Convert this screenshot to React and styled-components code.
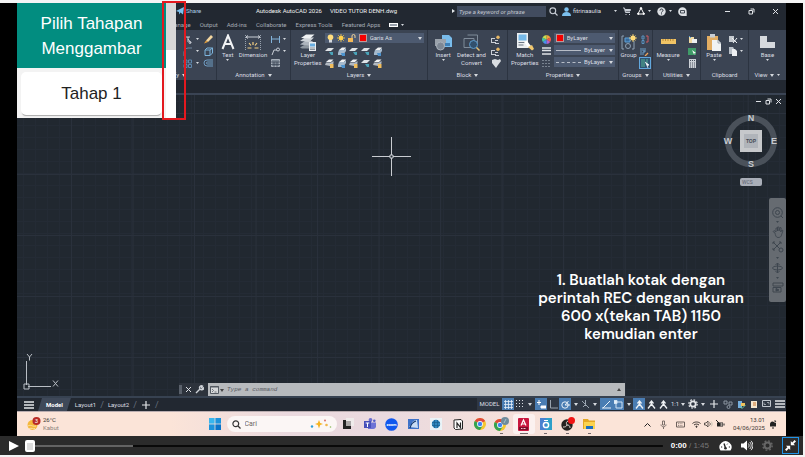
import React from "react";
import styled, { createGlobalStyle, css } from "styled-components";

const GlobalStyle = createGlobalStyle`
  * { box-sizing: border-box; }
  body { margin: 0; background: #f4f4f5; font-family: Roboto, "Open Sans", sans-serif; }
  button, input, select { font: inherit; color: inherit; margin: 0; padding: 0; border: 0; background: none; }
  button { cursor: pointer; }
  svg { display: block; flex: none; }
`;

/* ---------- icons ---------- */

const L = "#c9ced6";

const ICONS = {
  caret: [4, 3, <path d="M0 0h4L2 3z" fill="#d5d9de" />],
  dot: [3, 2, <path d="M0 0h3L1.5 2z" fill="#d5d9de" />],
  dotDark: [3, 2, <path d="M0 0h3L1.5 2z" fill="#3e464f" />],
  play: [10, 12, <path d="M0 1l10 5-10 5z" fill="#fff" />],
  plane: [8, 8, <path d="M0 4L8 0 7 7.500 4.500 5.500 3 7.500V5z" fill="#7cc0ee" />],
  search: [9, 9, <g fill="none" stroke={L} strokeWidth="1.100"><circle cx="3.800" cy="3.800" r="2.900" /><path d="M6 6l2.500 2.500" /></g>],
  searchDark: [9, 9, <g fill="none" stroke="#333" strokeWidth="1.200"><circle cx="3.800" cy="3.800" r="2.900" /><path d="M6 6l2.500 2.500" /></g>],
  user: [9, 9, <g fill="#7cc0ee"><circle cx="4.500" cy="2.500" r="2.200" /><path d="M0 9c0-3 2-4 4.500-4S9 6 9 9z" /></g>],
  cart: [8, 8, <g stroke={L} fill="none"><path d="M0 1h1.500l1 4.500H7" /><path d="M2 2.500h5.500L7 4H2.500z" fill={L} /><path d="M2.500 7.500h1M6 7.500h1" /></g>],
  aNodes: [8, 8, <g fill="none" stroke="#fff"><path d="M4 1L1 7h6z" /><circle cx="4" cy="1.300" r=".8" fill="#fff" /><circle cx="1.200" cy="6.800" r=".7" fill="#fff" /><circle cx="6.800" cy="6.800" r=".7" fill="#fff" /></g>],
  help: [9, 9, <g><circle cx="4.500" cy="4.500" r="4.200" fill="#dde0e4" /><path d="M3 3.500c0-2 3-2 3 0 0 1-1.500 1-1.500 2M4.500 6.400v1" stroke="#222933" fill="none" /></g>],
  chat: [9, 9, <g><path d="M4.500.3a4.200 4.200 0 0 1 4.200 4.200V9H4.500a4.200 4.200 0 0 1 0-8.700z" fill="#dde0e4" /><path d="M2.500 3.500h4v2.500h-4z" fill="none" stroke="#222933" strokeWidth=".8" /></g>],
  min: [7, 7, <path d="M1 3.500h5" stroke="#dfe2e6" />],
  restore: [7, 7, <g fill="none" stroke="#dfe2e6"><path d="M1 2.500h3.500V6H1z" /><path d="M2.500 1H6v3.500" /></g>],
  close: [7, 7, <path d="M1 1l5 5M6 1L1 6" stroke="#dfe2e6" />],
  trim: [9, 9, <g stroke={L} fill="none"><path d="M1 2h6M5 2v5M5 4l3 4" /><circle cx="7" cy="7.500" r="1" /></g>],
  fillet: [9, 9, <path d="M1 9V5a4 4 0 0 1 4-4h4" stroke="#71839a" fill="none" />],
  array: [9, 9, <path d="M1 1h3v3H1zM5.500 1h3v3h-3zM1 5.500h3v3H1zM5.500 5.500h3v3h-3z" stroke="#5f87ab" fill="none" />],
  pencil: [9, 9, <g><path d="M2 5.500L7 0l2 2-5 5z" fill="#f3d6a0" /><path d="M0 8.500L2 5.500 4 7z" fill="#e9a13a" /></g>],
  box: [9, 9, <g stroke="#7cb4dd" fill="none"><path d="M1 3h5v5.500H1zM1 3l2-2h5.500L6 3M8.500 1v5L6 8.500" /></g>],
  offset: [10, 8, <g stroke="#6f9cc2" fill="none"><path d="M10 1H4a3 3 0 0 0 0 6h6" /><path d="M10 3H4.500a1 1 0 0 0 0 2H10" /></g>],
  textA: [14, 16, <path d="M1.500 15L7 1.500 12.500 15M3.500 10h7" fill="none" stroke="#f1f3f5" strokeWidth="2" />],
  dimension: [18, 17, <g fill="none"><path d="M1.500 1v15M16.500 1v15" stroke="#98a2ae" strokeDasharray="1 1" /><path d="M2 3h14M2 3l2-1.500M2 3l2 1.500M16 3l-2-1.500M16 3l-2 1.500" stroke={L} /><path d="M9 8v3M5 9l2 2.500M13 9l-2 2.500M3.500 14h4M14.500 14h-4" stroke="#f3cf83" strokeWidth="1.200" /></g>],
  dimSmall: [9, 9, <g stroke="#83b3da" fill="none"><path d="M.5 1v7M8.500 1v7" /><path d="M1 4h7" /></g>],
  leader: [9, 9, <g stroke={L} fill="none"><path d="M1 8l2-5h3" /><circle cx="7" cy="2.500" r="1.500" /></g>],
  table: [9, 8, <g><path d="M.5.5h8v7h-8z" stroke="#a6aeb8" fill="#7c8794" /><path d="M0 3h9M3 3v5M6 3v5M0 5.500h9" stroke="#3a4453" strokeWidth=".7" /></g>],
  layers: [18, 17, <g><path d="M1 13.500l5-3h8l-4 4H3z" fill="#8d969f" /><path d="M1 10.500l5-3.500h8l-4 4.500z" fill="#aeb5bd" /><path d="M1 7l5-3.500h9L10.500 8z" fill="#ced3d8" /><path d="M2 4l5-3.500h8.500L11 4.500z" fill="#f0f2f4" /><path d="M10 8h7v9h-7z" fill="#e9edf0" /><path d="M11 9.500h5v3h-5z" fill="#69aee2" /><path d="M11 14h5M11 15.500h5" stroke="#5e6875" strokeWidth=".7" /></g>],
  bulb: [7, 9, <g><circle cx="3.500" cy="3.200" r="2.800" fill="#ffdd7e" /><path d="M2 6h3v2.500H2z" fill="#d7dade" /></g>],
  sun: [8, 8, <g><circle cx="4" cy="4" r="2.200" fill="#ffd04d" /><path d="M4 0v8M0 4h8M1.200 1.200l5.600 5.600M6.800 1.200L1.200 6.800" stroke="#ffd04d" strokeWidth=".8" /></g>],
  lock: [8, 8, <g><path d="M0 4h5v4H0z" fill="#f4b957" /><path d="M4 4V2a1.500 1.500 0 0 1 3 0v2" fill="none" stroke="#f1d39b" /></g>],
  layA: [9, 9, <g><path d="M0 4l3-3h6L6 4z" fill="#dfe3e7" /><path d="M4 5h4v3H6z" fill="#4aa3b8" /></g>],
  layB: [9, 9, <g><path d="M2 3l3-2.500h4L7 3z" fill="#eef0f2" /><path d="M1 6l1-3h5l2-2v3L6 8H1z" fill="#a5b9cc" /><path d="M4 6h4v3H5z" fill="#4c93ce" /></g>],
  layC: [9, 9, <g><path d="M1 3l3-2.500h4.500L6 3z" fill="#eef0f2" /><path d="M0 6l1-2.500h5L8.500 2v2.500L5 7z" fill="#b3bac2" /><path d="M5 5h3.500v4H5z" fill="#f0bd5c" /></g>],
  insert: [18, 17, <g><path d="M8 1h7l3 3v9H8z" fill="#79bceb" /><path d="M1 5h11v7H1z" fill="#9aa2ab" /><circle cx="6.500" cy="12" r="4" fill="#7e8894" stroke="#a9b1ba" /><path d="M11 9h5v3h-5z" fill="#3f7fb5" /></g>],
  detect: [17, 17, <g fill="none" stroke="#7f8b99"><path d="M4.500 1h10v9M1 4.500h10v9H1z" /><circle cx="10.500" cy="10.500" r="4" fill="#31506d" stroke="#5d9ccc" /><path d="M13.500 13.500l3 3" stroke="#e4c177" strokeWidth="1.500" /></g>],
  attr: [9, 9, <g><path d="M0 3h4v1H1v3h4v1H0zM4 5h3v1H4z" fill={L} /><circle cx="7" cy="2.300" r="1.700" fill="#e5b765" /><path d="M4 8.500h4" stroke={L} /></g>],
  tagCheck: [10, 9, <path d="M1 1l3-1 3 1 2-1 1 2-3 4-2 3-4-5z" fill="#d9dde1" />],
  match: [18, 18, <g><path d="M1 0h11v15H1z" fill="#eceff1" /><path d="M2.500 1.500h8v6h-8z" fill="#75b9e9" /><path d="M2.500 9.500h7M2.500 12h5" stroke="#6b7684" /><path d="M8 9l3-1 4 5-2.500 2z" fill="#fff" /><path d="M12 14l4-2 2 4-2 1.500z" fill="#f1c86e" /></g>],
  wheel: [9, 9, <g><path d="M4.500 4.500V0A4.500 4.500 0 0 1 8.500 2.500z" fill="#f0a23b" /><path d="M4.500 4.500l4-2a4.500 4.500 0 0 1-.3 4.500z" fill="#f05a4b" /><path d="M4.500 4.500l3.700 2.500A4.500 4.500 0 0 1 4.500 9z" fill="#b562cf" /><path d="M4.500 4.500V9A4.500 4.500 0 0 1 .8 7z" fill="#4b8ff0" /><path d="M4.500 4.500L.8 7a4.500 4.500 0 0 1-.3-4.500z" fill="#48c3a1" /><path d="M4.500 4.500l-4-2A4.500 4.500 0 0 1 4.500 0z" fill="#c8dc4f" /></g>],
  weight: [9, 9, <path d="M0 1h9M0 3.500h9M0 7h9" stroke="#dfe2e6" strokeWidth="1.500" />],
  ltype: [9, 9, <g stroke="#78828f"><path d="M0 1.500h9M0 4.500h9M0 7.500h9" strokeDasharray="2 1" /></g>],
  group: [16, 16, <g fill="none"><path d="M3 2H1v13h2M11 15h2V7" stroke="#8fa1b4" /><path d="M4 4h5v4H4z" fill="#38699a" stroke="#5fa1d8" /><circle cx="7" cy="12" r="2.500" stroke="#8fa1b4" /><circle cx="12" cy="4" r="2.500" fill="#ffe08a" /><path d="M12 0v8M8 4h8M9.500 1.500l5 5M14.500 1.500l-5 5" stroke="#ffd76e" strokeWidth=".8" /></g>],
  ungroup: [8, 9, <g fill="none"><path d="M1 1h2v3H1zM1 5.500h2v3H1z" stroke="#5a93c0" /><path d="M5 1h2v6H5" stroke="#cf5b62" /></g>],
  groupEdit: [9, 9, <g fill="none"><path d="M1 1v7M3 1v3h2M3 8V5h2V1" stroke="#6b9dc6" /><path d="M5 9l3-3" stroke="#f0a75a" strokeWidth="1.300" /></g>],
  groupSel: [10, 10, <g fill="none"><path d="M2 1v8M4 1v8M7 1v5" stroke="#55b292" /><path d="M5 4l4 3-2 .5L8 10" stroke="#fff" fill="#fff" strokeWidth=".7" /></g>],
  ruler: [15, 6, <g><path d="M0 0h15v5H0z" fill="#f1c465" /><path d="M2 0v2M4.500 0v2M7 0v2M9.500 0v2M12 0v2" stroke="#a87829" strokeWidth=".7" /></g>],
  idpt: [9, 9, <g><path d="M1 2h5v6H1z" fill="#f0d9a4" /><path d="M4 4h5v4H4z" fill="#eef1f3" /><path d="M1 1l2 2" stroke="#5fa8dc" /></g>],
  qsel: [9, 9, <g><path d="M0 1h8v7H0z" fill="#3f9b68" /><path d="M4 3l4 3-2 .5.500 2z" fill="#fff" /></g>],
  calc: [7, 9, <g><path d="M0 0h7v9H0z" fill="#ccd1d7" /><path d="M1 1.500h5M1 4h5M1 6h5M1 8h5" stroke="#48515e" strokeDasharray="1 1" /></g>],
  paste: [16, 17, <g><path d="M1 2h11v14H1z" fill="#e3ad62" /><path d="M4 0h5v3.500H4z" fill="#c9ced4" /><path d="M6 6h6l3 3v8H6z" fill="#f1f3f4" /><path d="M12 6v3h3" fill="none" stroke="#9ba4ae" /></g>],
  cut: [9, 9, <g><path d="M0 1h5v6H0z" fill="#c5cad0" /><path d="M3 3l5 5M8 3L4 8" stroke="#eef0f3" /></g>],
  copy: [9, 9, <g><path d="M0 0h4l1 1.500V7H0z" fill="#b9c0c8" /><path d="M3 2h3l2 2v5H3z" fill="#eef0f3" /></g>],
  base: [17, 14, <path d="M1 1h7v6h8v6H1z" fill="#d6d9dd" />],
  burger: [10, 8, <path d="M0 1h10M0 4h10M0 7h10" stroke="#e3e6e9" strokeWidth="1.300" />],
  plus: [8, 8, <path d="M4 0v8M0 4h8" stroke="#e3e6e9" strokeWidth="1.200" />],
  grid: [9, 9, <path d="M1.500 0v9M4.500 0v9M7.500 0v9M0 1.500h9M0 4.500h9M0 7.500h9" stroke="#e3edf6" strokeWidth=".8" />],
  dots: [7, 8, <path d="M.5 0v8M3.500 0v8M6.500 0v8" stroke="#d8dce1" strokeDasharray="1 2" />],
  dyn: [9, 9, <path d="M2 0v5M0 2.500h4M4 6h5v2H4z" stroke="#fff" fill="#fff" />],
  ortho: [9, 9, <path d="M1.500 0v8H9" stroke="#98a2ad" fill="none" />],
  polar: [9, 9, <g fill="none" stroke="#e8f0f8"><circle cx="4" cy="5" r="3.200" /><path d="M4 5h5M4 5l3.500-4" /></g>],
  iso: [9, 9, <path d="M1 1l7 7M4.500 0v6M2 7l2-2" stroke="#9aa4af" fill="none" />],
  track: [9, 9, <path d="M1 8L8 1M0 8h9" stroke="#e8f0f8" fill="none" />],
  osnap: [9, 9, <g fill="none" stroke="#cfe2f3"><path d="M2 2h6v6H2z" /><path d="M0 .5h3v3H0z" fill="#e8f0f8" /></g>],
  anno: [9, 9, <path d="M4.500.5v3.500L1 8.500M4.500 4L8 8.500M2.500 3.500L4.500 1l2 2.500" stroke="#f0f3f6" strokeWidth="1.300" fill="none" />],
  gear: [10, 10, <g fill="none" stroke="#e3e6e9"><circle cx="5" cy="5" r="2.700" strokeWidth="1.800" /><circle cx="5" cy="5" r="4.200" strokeDasharray="1.700 1.600" strokeWidth="1.200" /></g>],
  gearDim: [11, 11, <g fill="none" stroke="#666"><circle cx="5.500" cy="5.500" r="3" strokeWidth="2" /><circle cx="5.500" cy="5.500" r="4.700" strokeDasharray="1.850 1.850" strokeWidth="1.400" /></g>],
  iso2: [10, 9, <g fill="none" stroke="#8b95a1"><path d="M1 1h3v3H1zM6 2h3v3H6z" /><circle cx="5.500" cy="7" r="1.500" /></g>],
  hw: [9, 9, <g><path d="M1 1h4v7H1z" fill="#74aede" /><path d="M4 3h4v3H4z" fill="#f0c25b" /><path d="M3 6l2 2.500L8.500 5" stroke="#68c3a0" fill="none" /></g>],
  clean: [9, 9, <g><path d="M1 1h6v7H1z" fill="#f4e7d0" /><path d="M3 3h3M3 5h3" stroke="#c8742e" /></g>],
  full: [9, 8, <g fill="none" stroke="#bfc5cc"><path d="M.5.500h8v6h-8z" /><path d="M5 2.500h2v2M2 2.500v2h2" strokeWidth=".7" /></g>],
  axes: [37, 38, <g fill="none" stroke="#b9bec5"><path d="M4.500 32V8M6 33.500h23" /><path d="M2 31h5v5H2z" /><path d="M5 1l2.500 3L10 1M7.500 4v3.500M31 27.500l5 6M36 27.500l-5 6" /></g>],
  cross: [39, 39, <g stroke="#c9ccd1"><path d="M19.500 0v18M19.500 21v18M0 19.500h18M21 19.500h18" /><path d="M18 18h3v3h-3z" fill="#212830" /></g>],
  wrench: [9, 9, <path d="M1 8l4-4M5 4a2 2 0 0 1 2.500-3L6.500 2.500l1 1L9 2.500A2.300 2.300 0 0 1 5 4z" stroke="#cfd3d8" strokeWidth="1.400" fill="none" />],
  prompt: [14, 8, <g><path d="M.5.500h8v7h-8z" fill="#d6d8da" stroke="#555b63" /><path d="M0 1h9" stroke="#555b63" /><path d="M2 3l1.500 1.500L2 6M4.500 6h2" stroke="#555b63" fill="none" strokeWidth=".8" /><path d="M10 3h4l-2 3z" fill="#444" /></g>],
  up: [4, 3, <path d="M0 3h4L2 0z" fill="#444" />],
  wheelNav: [11, 11, <g fill="none" stroke="#3e464f"><circle cx="5.500" cy="5.500" r="4.800" /><circle cx="5.500" cy="5.500" r="2" /><path d="M9 9l2 2" /></g>],
  hand: [12, 12, <path d="M3 7L1 5.500l1-1 2 1.500V2h1.500v3V1H7v4l1-3.500 1.200.4L8.700 6l1.300-2 1 .6L9.500 9c-.5 2-1.500 2.500-3.500 2.500S3.500 9.500 3 7z" fill="none" stroke="#3e464f" strokeWidth=".9" />],
  zoomNav: [12, 12, <g fill="none" stroke="#3e464f"><path d="M1 1l7 7M9 1L1 9M1 3V1h2M7 1h2v2M1 7v2h2" /><circle cx="9" cy="9" r="2" /></g>],
  orbit: [11, 12, <g fill="none" stroke="#3e464f"><path d="M5.500 1v10M3.500 3l2-2 2 2M3.500 9l2 2 2-2" /><ellipse cx="5.500" cy="6" rx="5" ry="2" /></g>],
  movie: [12, 11, <g fill="none" stroke="#3e464f"><path d="M1 1h10v3H1zM1 5.500h8V10H1z" /><path d="M4 6.500L7 8 4 9z" fill="#3e464f" /></g>],
  weather: [14, 14, <g><circle cx="5.500" cy="8" r="5" fill="#f5b83b" /><path d="M1 9c3-2 4 1 8 0M2 11.500c3-1 4 1 6 0" stroke="#fbe0a2" fill="none" /><circle cx="9.500" cy="4" r="4" fill="#b82a25" /></g>],
  windows: [12, 12, <g fill="#1c93dc"><path d="M0 0h5.600v5.600H0z" fill="#38b6ee" /><path d="M6.400 0H12v5.600H6.400z" /><path d="M0 6.400h5.600V12H0z" /><path d="M6.400 6.400H12V12H6.400z" fill="#0b74c9" /></g>],
  sparkle: [22, 10, <g><path d="M9 1l1.200 3L13 5l-2.800 1L9 9.500 7.800 6 5 5l2.800-1z" fill="#f6b420" /><circle cx="2" cy="7.500" r="1.200" fill="#2c9fd6" /><circle cx="15" cy="1.500" r=".9" fill="#d9635a" /><circle cx="16.500" cy="6" r="1.300" fill="#f0b64b" /><circle cx="20.500" cy="8" r=".8" fill="#8dbb5b" /></g>],
  taskview: [12, 12, <g><path d="M1 2h8v9H1z" fill="#222" /><path d="M4 0h8v8H4z" fill="#efeceb" /><path d="M4 3h5v5H4z" fill="#a9a6a6" /></g>],
  teams: [12, 12, <g><circle cx="6.500" cy="2" r="1.900" fill="#6a6fd0" /><circle cx="10.300" cy="2.700" r="1.300" fill="#5059c9" /><path d="M4 4.500h8V9a3 3 0 0 1-3 2H4z" fill="#6d72d6" /><path d="M0 3h7v7H0z" fill="#4650ba" /><path d="M1.700 5h3.600M3.500 5v4" stroke="#fff" /></g>],
  zoom: [13, 13, <g><circle cx="6.500" cy="6.500" r="6.300" fill="#1157ee" /><text x="6.500" y="7.500" fontSize="4" fontWeight="700" textAnchor="middle" fill="#fff">zoom</text></g>],
  curve: [11, 12, <g><path d="M0 1h11v10H0z" fill="#3f73c9" /><path d="M1 9l3-3c0-3 3-4 5-4l1 8" fill="#c9dcf4" /><path d="M2 10c1-4 3-6 6-7" stroke="#14386e" fill="none" strokeWidth="1.200" /></g>],
  atom: [12, 12, <g><path d="M0 0h12v12H0z" fill="#eaf3f7" /><circle cx="6" cy="6" r="4.200" fill="#2f86bd" /><path d="M2 4.500h8M2 7.500h8M4.500 2v8M7.500 2v8" stroke="#16608f" strokeWidth=".7" /></g>],
  notion: [10, 11, <g><path d="M1 1l7-.5L9.500 2v8L2.500 10.500 1 9z" fill="#fff" stroke="#222" /><path d="M4 9V4l3.500 4.500v-5" stroke="#222" fill="none" strokeWidth="1.200" /></g>],
  chrome: [12, 12, <g><circle cx="6" cy="6" r="6" fill="#f6c62f" /><path d="M6 6L.8 3A6 6 0 0 1 11.200 3z" fill="#df4a3c" /><path d="M6 6L.8 3A6 6 0 0 0 6 12l2.500-4z" fill="#34a353" /><circle cx="6" cy="6" r="2.900" fill="#fff" /><circle cx="6" cy="6" r="2.200" fill="#4285f4" /></g>],
  chromeAlt: [15, 14, <g><g transform="translate(0 2)"><circle cx="6" cy="6" r="6" fill="#f6c62f" /><path d="M6 6L.8 3A6 6 0 0 1 11.200 3z" fill="#df4a3c" /><path d="M6 6L.8 3A6 6 0 0 0 6 12l2.500-4z" fill="#34a353" /><circle cx="6" cy="6" r="2.900" fill="#fff" /><circle cx="6" cy="6" r="2.200" fill="#4285f4" /></g><circle cx="11" cy="4" r="4" fill="#708c9c" /><path d="M10 6l2-4" stroke="#a6c0cc" /></g>],
  acad: [11, 13, <g><path d="M0 1a1 1 0 0 1 1-1h9a1 1 0 0 1 1 1v11a1 1 0 0 1-1 1H1a1 1 0 0 1-1-1z" fill="#c8173f" /><path d="M3 7.500L5.500 2 8 7.500M4 6h3" stroke="#fff" fill="none" strokeWidth="1.200" /><path d="M1 9h9v3H1z" fill="#7d0d2a" /><path d="M3 10.500h5" stroke="#f4c8d2" strokeDasharray="1 .5" /></g>],
  bApp: [12, 13, <g><path d="M0 0h12v12H0z" fill="#2d9fc9" /><path d="M0 0h6v12H0z" fill="#5a6ed6" opacity=".6" /><circle cx="6" cy="7" r="2.600" fill="none" stroke="#fff" strokeWidth="1.500" /><path d="M4 2.500h4" stroke="#fff" /></g>],
  obs: [14, 14, <g><circle cx="6" cy="8" r="5.700" fill="#24211f" /><path d="M6 8c-1-2-1-3 1-4M6 8c2 0 3 1 3 3M6 8c-1 2-2 2-4 2" stroke="#d8d2cd" fill="none" /><circle cx="10.500" cy="3.500" r="3.500" fill="#f01414" /></g>],
  folder: [13, 12, <g><path d="M0 1h5l1 1.500h6V11H0z" fill="#e5a823" /><path d="M1 4h11v7H1z" fill="#fbd24e" /><path d="M3 8h7v3H3z" fill="#1a6fc0" /></g>],
  chevUp: [7, 5, <path d="M.5 4.500l3-3 3 3" stroke="#222" fill="none" />],
  mic: [7, 9, <g fill="none" stroke="#7b6f6a"><path d="M2.500 1h2v4h-2zM1 4.500c0 3 5 3 5 0M3.500 7v2" /></g>],
  kb: [9, 7, <g fill="none" stroke="#6e625d"><path d="M.5 1h8v5h-8z" /><path d="M2 2.700h5M2 4.500h5" strokeDasharray="1 .7" strokeWidth=".7" /></g>],
  wifi: [9, 7, <g fill="none" stroke="#3b3532"><path d="M.5 2.500c2-2 6-2 8 0M2 4c1.500-1.200 3.500-1.200 5 0" /><circle cx="4.500" cy="5.700" r=".6" fill="#222" /></g>],
  vol: [9, 8, <g fill="none" stroke="#3b3532" strokeWidth=".8"><path d="M.5 3H2l2-2v6L2 5H.500zM5.500 2.500c1 1 1 2 0 3" /><path d="M7 1.500c1.500 1.500 1.500 3.500 0 5" stroke="#bba" /></g>],
  batt: [9, 8, <g><path d="M1 2.500h6v4H1zM7.500 3.500h1v2h-1z" fill="#222" /><path d="M0 0l3 3-1 2M4 3l1 2" stroke="#222" fill="none" /><path d="M4.500 3h2v3h-2z" fill="#a89e98" /></g>],
  bell: [8, 9, <g fill="#222"><path d="M1 6.500V4a2.500 2.500 0 0 1 4-2v1h2v3.500zM3 7.500h2v1H3z" /><path d="M5 1h2L5 3.500h2" stroke="#222" fill="none" strokeWidth=".8" /></g>],
  speed: [13, 11, <g><path d="M1.500 10.500a6 6 0 1 1 10 0z" fill="#fff" /><path d="M6.500 8L5 3.500" stroke="#262626" strokeWidth="1.400" /><circle cx="6.500" cy="8.200" r="1.300" fill="#262626" /><path d="M2 7h1.200M9.800 7H11M8.600 3.700l-.6.800" stroke="#262626" /></g>],
  speaker: [12, 11, <g><path d="M0 3.500h2.500L6 .5v10l-3.500-3H0z" fill="#fff" /><path d="M7.300 3.500c1 1 1 3 0 4M8.700 2c2 2 2 5 0 7M10 .8c2.500 2.600 2.500 6.800 0 9.400" stroke="#fff" fill="none" strokeWidth=".9" /></g>],
  shrink: [11, 11, <g fill="#fff"><path d="M5.800 5.200V1l1.400 1.400L9.600 0 11 1.400 8.600 3.800 10 5.200z" /><path d="M5.200 5.800H1l1.400 1.400L0 9.600 1.400 11l2.400-2.400L5.200 10z" /></g>],
};

function Icon({ name }) {
  const [w, h, art] = ICONS[name];
  return <svg width={w} height={h} viewBox={`0 0 ${w} ${h}`} aria-hidden="true">{art}</svg>;
}

/* ---------- shell ---------- */

const Page = styled.div`
  position: relative;
  display: flex;
  flex-direction: column;
  min-height: 100vh;
  padding: 3px 2px 2px 0;
  background: #f4f4f5;
`;
const Stage = styled.main`
  flex: 1;
  display: flex;
  padding: 0 17px;
  background: #000;
`;
const CadWindow = styled.section`
  flex: 1;
  min-width: 0;
  display: flex;
  flex-direction: column;
  background: #222831;
  color: #dcdfe3;
  font-size: 6px;
  line-height: 8px;
  white-space: nowrap;
`;
const TitleBar = styled.header`
  display: flex;
  align-items: center;
  height: 16px;
  padding: 0 7px 0 159px;
`;
const ShareButton = styled.button`
  display: flex;
  align-items: center;
  gap: 2px;
  color: #a9cbe6;
`;
const WindowTitle = styled.h1`
  flex: 1;
  display: flex;
  justify-content: center;
  gap: 8px;
  margin: 0;
  font-size: 6px;
  font-weight: 400;
  color: #f0f2f4;
`;
const TitleSearch = styled.input`
  width: 89px;
  height: 11px;
  margin: 0 3px 0 2px;
  padding: 0 2px;
  background: #424c5f;
  font-style: italic;
  &::placeholder { color: #c2c8d0; opacity: 1; }
`;
const Arrow = styled.span`
  width: 0;
  border: 2px solid transparent;
  border-left: 3px solid #e3e6e9;
  border-right: 0;
`;
const IconButton = styled.button`
  display: flex;
  align-items: center;
  justify-content: center;
  gap: 3px;
  flex: none;
`;
const UserMenu = styled(IconButton)`
  margin-left: 4px;
  gap: 2px;
`;
const TitleTools = styled.div`
  display: flex;
  align-items: center;
  gap: 6px;
  margin-left: 13px;
`;
const WindowControls = styled.div`
  display: flex;
  gap: 17px;
  margin-left: 37px;
`;
const Tabs = styled.nav`
  display: flex;
  align-items: center;
  gap: 9px;
  height: 11px;
  padding-left: 152px;
  color: #a4abb5;
`;
const Tab = styled.button``;
const MiniPill = styled.span`
  width: 9px;
  height: 4px;
  border: 1px solid #fff;
  background: #9aa2ad;
`;

/* ---------- ribbon ---------- */

const Ribbon = styled.div`
  display: grid;
  grid-template-columns: 200fr 74fr 137fr 80fr 111fr 34fr 48fr 48fr 37fr;
  height: 50px;
  background: #3b4453;
`;
const Panel = styled.section`
  display: flex;
  flex-direction: column;
  min-width: 0;
  border-right: 1px solid #2c3441;
  &:last-child { border-right: 0; }
`;
const PanelBody = styled.div`
  flex: 1;
  display: flex;
  justify-content: ${(p) => p.$align || "center"};
  gap: ${(p) => p.$gap || 4}px;
  padding: 3px 3px 0;
`;
const PanelTitle = styled.h2`
  display: flex;
  align-items: center;
  justify-content: ${(p) => p.$align || "center"};
  gap: 3px;
  height: 10px;
  margin: 0;
  padding: 0 3px;
  font-size: 6px;
  font-weight: 400;
`;
const BigTool = styled.button`
  display: flex;
  flex-direction: column;
  align-items: center;
  height: 34px;
  flex: none;
  line-height: 8px;
`;
const BigArt = styled.span`
  display: flex;
  align-items: center;
  height: 18px;
`;
const ToolGrid = styled.div`
  display: grid;
  grid-template-columns: repeat(${(p) => p.$cols || 1}, max-content);
  grid-auto-rows: 12px;
  column-gap: ${(p) => p.$gap || 4}px;
  align-items: center;
  align-content: start;
`;
const SelectedTool = styled(IconButton)`
  width: 12px;
  height: 12px;
  border: 1px solid #62a8dd;
  background: #2f5474;
`;
const Column = styled.div`
  flex: 1;
  min-width: 0;
  display: flex;
  flex-direction: column;
`;
const Combo = styled.label`
  display: flex;
  align-items: center;
  gap: 3px;
  height: 10px;
  margin-bottom: 2px;
  padding: 0 2px;
  background: #4d5a70;
`;
const ComboSelect = styled.select`
  flex: ${(p) => (p.$end ? "none" : "1")};
  min-width: 0;
  appearance: none;
`;
const Swatch = styled.span`
  flex: none;
  width: 8px;
  height: 8px;
  background: #f40000;
  border: 1px solid #b99;
`;
const LineSample = styled.span`
  flex: 1;
  border-top: 1px ${(p) => (p.$dashed ? "dashed" : "solid")} #b7bdc7;
`;

function Big({ icon, lines, menu }) {
  return (
    <BigTool>
      <BigArt><Icon name={icon} /></BigArt>
      {lines.map((l) => <span key={l}>{l}</span>)}
      {menu && <Icon name="dot" />}
    </BigTool>
  );
}

function Tools({ names, cols, gap }) {
  return (
    <ToolGrid $cols={cols} $gap={gap}>
      {names.map((n, i) => <IconButton key={i} aria-label={n}><Icon name={n} /></IconButton>)}
    </ToolGrid>
  );
}

/* ---------- drawing area ---------- */

const FileStrip = styled.div`
  height: 15px;
  border-bottom: 2px solid #3a4454;
`;
const Canvas = styled.section`
  position: relative;
  flex: 1;
  background:
    linear-gradient(90deg, #2a313c 1px, transparent 1px) 54px 0 / 8% 100%,
    linear-gradient(#2a313c 1px, transparent 1px) 0 18px / 100% 61px,
    linear-gradient(90deg, #242b35 1px, transparent 1px) 54px 0 / 12px 100%,
    linear-gradient(#242b35 1px, transparent 1px) 0 18px / 100% 12px,
    #212830;
`;
const DocControls = styled.div`
  position: absolute;
  top: 3px;
  right: 4px;
  display: flex;
  gap: 3px;
`;
const Cursor = styled.div`
  position: absolute;
  left: 355px;
  top: 42px;
`;
const Ucs = styled.div`
  position: absolute;
  left: 5px;
  bottom: 5px;
`;
const ViewCube = styled.div`
  position: absolute;
  top: 15px;
  right: 4px;
  display: grid;
  grid-template: 16px 30px 16px / 16px 30px 16px;
  place-items: center;
  color: #c8cbd0;
  font: 700 9px/10px "Liberation Sans", sans-serif;
  &::before {
    content: "";
    position: absolute;
    inset: 5px;
    border: 6px solid #4a515a;
    border-radius: 50%;
  }
`;
const areas = { N: "1 / 2", W: "2 / 1", E: "2 / 3", S: "3 / 2" };
const Compass = styled.span`
  position: relative;
  grid-area: ${(p) => areas[p.$dir]};
`;
const CubeFace = styled.button`
  position: relative;
  grid-area: 2 / 2;
  width: 22px;
  height: 22px;
  border: 4px solid #c6c8cb;
  background: #b0b4ba;
  color: #454b54;
  font-size: 5px;
  line-height: 8px;
`;
const Wcs = styled.button`
  position: absolute;
  top: 83px;
  right: 24px;
  width: 22px;
  height: 8px;
  padding-left: 2px;
  border-radius: 2px;
  background: #a9aeb8;
  color: #59606c;
  font-size: 5px;
  line-height: 8px;
  text-align: left;
`;
const NavBar = styled.div`
  position: absolute;
  top: 103px;
  right: 0;
  display: flex;
  flex-direction: column;
  align-items: center;
  justify-content: space-between;
  width: 17px;
  height: 104px;
  padding: 9px 0;
  border-radius: 2px;
  background: #666b71;
`;
const Caption = styled.p`
  position: absolute;
  top: 176px;
  right: 38px;
  width: 214px;
  margin: 0;
  color: #fff;
  font: 600 15px/18px "DM Sans", Inter, sans-serif;
  text-align: center;
  white-space: normal;
`;
const CommandLine = styled.form`
  position: absolute;
  left: 162px;
  right: 161px;
  bottom: 0;
  display: flex;
  height: 13px;
  background: #2d333c;
`;
const CommandHandle = styled.div`
  display: flex;
  align-items: center;
  gap: 3px;
  width: 29px;
  &::before {
    content: "";
    width: 3px;
    height: 9px;
    background: #5a616b;
  }
`;
const CommandField = styled.label`
  flex: 1;
  display: flex;
  align-items: center;
  gap: 3px;
  padding: 0 4px 0 2px;
  background: #b7babd;
`;
const CommandInput = styled.input`
  flex: 1;
  color: #333;
  font: italic 6px/9px "Liberation Mono", monospace;
  outline: 0;
  &::placeholder { color: #55595e; opacity: 1; }
`;

/* ---------- status bar ---------- */

const StatusBar = styled.div`
  display: flex;
  align-items: center;
  height: 15px;
  border-top: 2px solid #374251;
  padding-left: 7px;
`;
const LayoutTab = styled.button`
  height: 13px;
  padding: 0 4px;
  ${(p) => p.$active && css`
    margin-left: 4px;
    padding: 0 8px;
    background: #3f4959;
    color: #fff;
    font-weight: 700;
    clip-path: polygon(4px 0, 100% 0, calc(100% - 4px) 100%, 0 100%);
  `}
`;
const Slash = styled.span`
  color: #66707e;
  font-size: 9px;
`;
const StatusTools = styled.div`
  display: flex;
  margin-left: auto;
  height: 13px;
`;
const StatusButton = styled.button`
  display: flex;
  align-items: center;
  justify-content: center;
  gap: 2px;
  width: ${(p) => p.$w || 12}px;
  height: 12px;
  background: ${(p) => (p.$on ? "#4a7db3" : p.$flat ? "none" : "#2f3743")};
`;

const STATUS = [
  ["grid", 12, 1], ["dots", 11], ["caret", 10], ["dyn", 12, 1], ["ortho", 12], ["polar", 12, 1], ["caret", 9],
  ["iso", 10], ["caret", 10], ["track", 12, 1], ["osnap", 12, 1], ["caret", 9], ["anno", 12, 1], ["anno", 12],
  ["anno", 12], ["scale", 18], ["gear", 12], ["caret", 8], ["plus", 14], ["iso2", 14], ["hw", 13], ["clean", 12],
  ["full", 13], ["burger", 13],
];

/* ---------- desktop taskbar ---------- */

const Taskbar = styled.footer`
  display: grid;
  grid-template-columns: 1fr auto 1fr;
  align-items: center;
  height: 25px;
  border-top: 1px solid #b9adb0;
  background: linear-gradient(90deg, #fbe4d8 0, #fbe4d8 20%, #ead9de 35%, #eadadf 48%, #fbe4d8 75%);
  color: #3d3733;
`;
const Weather = styled.button`
  display: flex;
  align-items: center;
  gap: 2px;
  padding-left: 10px;
  text-align: left;
`;
const WeatherArt = styled.span`
  position: relative;
`;
const WeatherCount = styled.span`
  position: absolute;
  top: 0;
  right: 3px;
  color: #fff;
`;
const Muted = styled.span`
  color: #8a7f79;
`;
const Dock = styled.div`
  display: flex;
  align-items: center;
`;
const StartButton = styled(IconButton)`
  width: 24px;
`;
const DockSearch = styled.label`
  display: flex;
  align-items: center;
  gap: 4px;
  width: 110px;
  height: 16px;
  padding: 0 5px;
  border-radius: 8px;
  background: #fbf6f5;
`;
const DockInput = styled.input`
  flex: 1;
  min-width: 0;
  font-size: 7px;
  &::placeholder { color: #6e6763; opacity: 1; }
`;
const DockApp = styled.button`
  position: relative;
  display: flex;
  align-items: center;
  justify-content: center;
  width: 22px;
  height: 20px;
  border-radius: 3px;
  background: ${(p) => (p.$active ? "#fbf1ef" : "none")};
  &::after {
    content: "";
    position: absolute;
    bottom: 0;
    width: ${(p) => (p.$active ? 8 : p.$open ? 3 : 0)}px;
    height: 1px;
    background: #746a6d;
  }
`;
const Tray = styled.div`
  display: flex;
  align-items: center;
  justify-content: flex-end;
  gap: 4px;
  padding-right: 9px;
`;
const TrayGroup = styled.div`
  display: flex;
  align-items: center;
  gap: ${(p) => p.$gap}px;
  padding-right: ${(p) => p.$end || 0}px;
`;
const Clock = styled.time`
  padding-left: 4px;
  text-align: right;
`;
const DOCK = [
  ["taskview"], ["teams"], ["zoom"], ["curve"], ["atom"], ["notion"], ["chrome"], ["chromeAlt", 1],
  ["acad", 1, 1], ["bApp", 1], ["obs", 1], ["folder", 1],
];

/* ---------- player ---------- */

const Player = styled.div`
  display: flex;
  align-items: center;
  height: 19px;
  padding: 0 4px 0 9px;
  background: #2b2b2b;
  color: #fff;
  font: 8px/10px "Liberation Sans", sans-serif;
`;
const Seek = styled.input`
  flex: 1;
  min-width: 0;
  height: 14px;
  margin: 0 8px 0 6px;
  appearance: none;
  background: linear-gradient(90deg, #636363 0 17%, #090909 17%) center / 100% 2px no-repeat;
  &::-webkit-slider-thumb {
    appearance: none;
    width: 10px;
    height: 12px;
    border: 2px solid #fff;
    border-top-width: 3px;
    border-radius: 2px;
    background: #dcdcdc;
  }
`;
const Time = styled.span`
  color: #777;
  white-space: nowrap;
`;
const Now = styled.b`
  color: #fff;
  font-weight: 700;
`;
const PlayerTools = styled.div`
  display: flex;
  align-items: center;
  gap: 9px;
  margin-left: 10px;
`;
const ExitFull = styled.button`
  display: flex;
  align-items: center;
  justify-content: center;
  width: 17px;
  height: 17px;
  border: 1px solid #1f93e6;
`;

/* ---------- step menu laid over the video ---------- */

const StepMenu = styled.aside`
  position: absolute;
  top: 3px;
  left: 17px;
  display: flex;
  width: 159px;
  background: #fff;
  font: 17px/25px "Liberation Sans", sans-serif;
`;
const StepContent = styled.div`
  flex: 1;
  background: #f3f3f3;
`;
const StepHeading = styled.h2`
  margin: 0;
  padding: 8px 10px 7px;
  background: #028d80;
  color: #fff;
  font-size: 17px;
  font-weight: 400;
  text-align: center;
`;
const StepButton = styled.button`
  display: block;
  width: calc(100% - 8px);
  height: 43px;
  margin: 4px 4px 3px;
  border-radius: 5px;
  background: #fff;
  box-shadow: 0 2px 1px -1px #aaa;
  color: #222;
`;
const ScrollTrack = styled.div`
  width: 10px;
  background: #fff;
`;
const ScrollThumb = styled.div`
  height: 47px;
  background: #d8d8d8;
`;
const Highlight = styled.div`
  position: absolute;
  top: 1px;
  left: 162px;
  width: 24px;
  height: 119px;
  border: 2px solid #e3191f;
`;

export default function App() {
  return (
    <Page>
      <GlobalStyle />
      <Stage>
        <CadWindow>
          <TitleBar>
            <ShareButton><Icon name="plane" />Share</ShareButton>
            <WindowTitle><span>Autodesk AutoCAD 2026</span><span>VIDEO TUTOR DENH.dwg</span></WindowTitle>
            <Arrow />
            <TitleSearch aria-label="Search help" placeholder="Type a keyword or phrase" />
            <IconButton aria-label="Search"><Icon name="search" /></IconButton>
            <UserMenu><Icon name="user" />fitrinaaulia</UserMenu>
            <TitleTools>
              <Icon name="dot" />
              <IconButton aria-label="Cart"><Icon name="cart" /></IconButton>
              <IconButton aria-label="Autodesk App Store"><Icon name="aNodes" /><Icon name="dot" /></IconButton>
              <IconButton aria-label="Help"><Icon name="help" /><Icon name="dot" /></IconButton>
              <IconButton aria-label="Assistant"><Icon name="chat" /></IconButton>
            </TitleTools>
            <WindowControls>
              <IconButton aria-label="Minimize"><Icon name="min" /></IconButton>
              <IconButton aria-label="Restore"><Icon name="restore" /></IconButton>
              <IconButton aria-label="Close"><Icon name="close" /></IconButton>
            </WindowControls>
          </TitleBar>
          <Tabs>
            {["Manage", "Output", "Add-ins", "Collaborate", "Express Tools", "Featured Apps"].map((t) => <Tab key={t}>{t}</Tab>)}
            <IconButton aria-label="Ribbon options"><MiniPill /><Icon name="dot" /></IconButton>
          </Tabs>

          <Ribbon>
            <Panel>
              <PanelBody $align="flex-end">
                <Tools cols={3} gap={4} names={["trim", "dot", "pencil", "fillet", "dot", "box", "array", "dot", "offset"]} />
              </PanelBody>
              <PanelTitle $align="flex-end">Modify <Icon name="caret" /><TrayGroup $end={24} /></PanelTitle>
            </Panel>
            <Panel>
              <PanelBody>
                <Big icon="textA" lines={["Text"]} menu />
                <Big icon="dimension" lines={["Dimension"]} />
                <Tools cols={2} gap={3} names={["dimSmall", "dot", "leader", "dot", "table"]} />
              </PanelBody>
              <PanelTitle>Annotation <Icon name="caret" /></PanelTitle>
            </Panel>
            <Panel>
              <PanelBody $gap={3}>
                <Big icon="layers" lines={["Layer", "Properties"]} />
                <Column>
                  <Combo>
                    <Icon name="bulb" /><Icon name="sun" /><Icon name="lock" /><Swatch />
                    <ComboSelect aria-label="Layer"><option>Garis As</option></ComboSelect>
                    <Icon name="caret" />
                  </Combo>
                  <Tools cols={5} gap={3} names={["layA", "layB", "layA", "layA", "layB", "layC", "layB", "layC", "layA", "layC"]} />
                </Column>
              </PanelBody>
              <PanelTitle>Layers <Icon name="caret" /></PanelTitle>
            </Panel>
            <Panel>
              <PanelBody $gap={5}>
                <Big icon="insert" lines={["Insert"]} menu />
                <Big icon="detect" lines={["Detect and", "Convert"]} />
                <Tools names={["attr", "attr", "tagCheck"]} />
              </PanelBody>
              <PanelTitle>Block <Icon name="caret" /></PanelTitle>
            </Panel>
            <Panel>
              <PanelBody $gap={3}>
                <Big icon="match" lines={["Match", "Properties"]} />
                <Tools names={["wheel", "weight", "ltype"]} />
                <Column>
                  <Combo><Swatch /><ComboSelect aria-label="Color"><option>ByLayer</option></ComboSelect><Icon name="caret" /></Combo>
                  <Combo><LineSample /><ComboSelect $end aria-label="Lineweight"><option>ByLayer</option></ComboSelect><Icon name="caret" /></Combo>
                  <Combo><LineSample $dashed /><ComboSelect $end aria-label="Linetype"><option>ByLayer</option></ComboSelect><Icon name="caret" /></Combo>
                </Column>
              </PanelBody>
              <PanelTitle>Properties <Icon name="caret" /></PanelTitle>
            </Panel>
            <Panel>
              <PanelBody $gap={2}>
                <Big icon="group" lines={["Group"]} />
                <ToolGrid>
                  <IconButton aria-label="Ungroup"><Icon name="ungroup" /></IconButton>
                  <IconButton aria-label="Group edit"><Icon name="groupEdit" /></IconButton>
                  <SelectedTool aria-label="Group selection"><Icon name="groupSel" /></SelectedTool>
                </ToolGrid>
              </PanelBody>
              <PanelTitle>Groups <Icon name="caret" /></PanelTitle>
            </Panel>
            <Panel>
              <PanelBody $gap={8}>
                <Big icon="ruler" lines={["Measure"]} menu />
                <Tools names={["idpt", "qsel", "calc"]} />
              </PanelBody>
              <PanelTitle>Utilities <Icon name="caret" /></PanelTitle>
            </Panel>
            <Panel>
              <PanelBody $gap={7}>
                <Big icon="paste" lines={["Paste"]} menu />
                <Tools cols={2} gap={2} names={["cut", "dot", "copy", "dot"]} />
              </PanelBody>
              <PanelTitle>Clipboard</PanelTitle>
            </Panel>
            <Panel>
              <PanelBody $gap={8}><Big icon="base" lines={["Base"]} menu /></PanelBody>
              <PanelTitle>View <Icon name="caret" /><Icon name="dot" /></PanelTitle>
            </Panel>
          </Ribbon>
          <FileStrip />

          <Canvas>
            <DocControls>
              <IconButton aria-label="Minimize drawing"><Icon name="min" /></IconButton>
              <IconButton aria-label="Restore drawing"><Icon name="restore" /></IconButton>
              <IconButton aria-label="Close drawing"><Icon name="close" /></IconButton>
            </DocControls>
            <Cursor><Icon name="cross" /></Cursor>
            <ViewCube>
              {["N", "W", "E", "S"].map((d) => <Compass key={d} $dir={d}>{d}</Compass>)}
              <CubeFace>TOP</CubeFace>
            </ViewCube>
            <Wcs>WCS</Wcs>
            <NavBar>
              {["wheelNav", "dotDark", "hand", "zoomNav", "dotDark", "orbit", "dotDark", "movie"].map((n, i) => (
                <IconButton key={i} aria-label={n}><Icon name={n} /></IconButton>
              ))}
            </NavBar>
            <Caption>1. Buatlah kotak dengan perintah REC dengan ukuran 600 x(tekan TAB) 1150 kemudian enter</Caption>
            <Ucs><Icon name="axes" /></Ucs>
            <CommandLine>
              <CommandHandle><Icon name="close" /><Icon name="wrench" /></CommandHandle>
              <CommandField>
                <Icon name="prompt" />
                <CommandInput aria-label="Command" placeholder="Type a command" />
                <Icon name="up" />
              </CommandField>
            </CommandLine>
          </Canvas>

          <StatusBar>
            <IconButton aria-label="Layouts"><Icon name="burger" /></IconButton>
            <LayoutTab $active>Model</LayoutTab>
            <LayoutTab>Layout1</LayoutTab><Slash>/</Slash>
            <LayoutTab>Layout2</LayoutTab><Slash>/</Slash>
            <StatusButton $flat $w={18} aria-label="New layout"><Icon name="plus" /></StatusButton><Slash>/</Slash>
            <StatusTools>
              <StatusButton $w={25}>MODEL</StatusButton>
              {STATUS.map(([n, w, on], i) => (
                <StatusButton key={i} $w={w} $on={on} aria-label={n}>
                  {n === "scale" ? <>1:1<Icon name="caret" /></> : <Icon name={n} />}
                </StatusButton>
              ))}
            </StatusTools>
          </StatusBar>

          <Taskbar>
            <Weather>
              <WeatherArt><Icon name="weather" /><WeatherCount>3</WeatherCount></WeatherArt>
              <span>26°C<br /><Muted>Kabut</Muted></span>
            </Weather>
            <Dock>
              <StartButton aria-label="Start"><Icon name="windows" /></StartButton>
              <DockSearch><Icon name="searchDark" /><DockInput aria-label="Cari" placeholder="Cari" /><Icon name="sparkle" /></DockSearch>
              {DOCK.map(([n, open, active]) => (
                <DockApp key={n} $open={open} $active={active} aria-label={n}><Icon name={n} /></DockApp>
              ))}
            </Dock>
            <Tray>
              <TrayGroup $gap={9} $end={3}><Icon name="chevUp" /><Icon name="mic" /><Icon name="kb" /></TrayGroup>
              <TrayGroup $gap={3}><Icon name="wifi" /><Icon name="vol" /><Icon name="batt" /></TrayGroup>
              <Clock>13.01<br />04/06/2025</Clock>
              <Icon name="bell" />
            </Tray>
          </Taskbar>
        </CadWindow>
      </Stage>

      <Player>
        <IconButton aria-label="Play"><Icon name="play" /></IconButton>
        <Seek type="range" min="0" max="105" defaultValue="0" aria-label="Seek" />
        <Time><Now>0:00</Now> / 1:45</Time>
        <PlayerTools>
          <IconButton aria-label="Playback speed"><Icon name="speed" /></IconButton>
          <IconButton aria-label="Volume"><Icon name="speaker" /></IconButton>
          <IconButton aria-label="Settings"><Icon name="gearDim" /></IconButton>
          <ExitFull aria-label="Exit full screen"><Icon name="shrink" /></ExitFull>
        </PlayerTools>
      </Player>

      <StepMenu>
        <StepContent>
          <StepHeading>Pilih Tahapan Menggambar</StepHeading>
          <StepButton>Tahap 1</StepButton>
        </StepContent>
        <ScrollTrack><ScrollThumb /></ScrollTrack>
      </StepMenu>
      <Highlight />
    </Page>
  );
}
